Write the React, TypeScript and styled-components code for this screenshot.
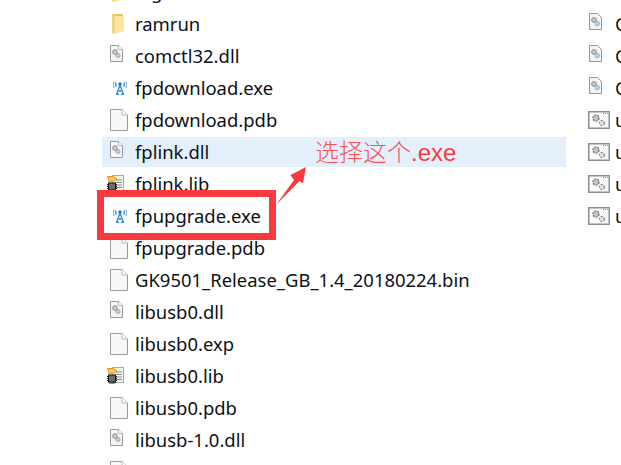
import React from 'react';
import styled, {createGlobalStyle} from 'styled-components';

const GlobalStyle = createGlobalStyle`
  html, body {
    margin: 0;
    padding: 0;
    background: #ffffff;
    overflow: hidden;
  }
`;

const Page = styled.div`
  position: relative;
  width: 621px;
  height: 465px;
  overflow: hidden;
  display: flex;
  font-family: "Noto Sans", "Open Sans", sans-serif;
  color: #0c1116;
`;

const FileColumn = styled.div`
  width: 464px;
  margin-left: 102px;
  margin-top: -24px;
  flex-shrink: 0;
`;

const SideColumn = styled.div`
  margin-left: 22px;
  margin-top: 8px;
  flex: 1;
  min-width: 0;
`;

const Row = styled.div<{$selected?: boolean}>`
  height: 32px;
  display: flex;
  align-items: center;
  box-sizing: border-box;
  background: ${p => (p.$selected ? 'linear-gradient(#fff 1px, #e3f0fb 1px, #e3f0fb 31px, #fff 31px)' : 'transparent')};
`;

const IconSlot = styled.span`
  width: 33px;
  height: 32px;
  flex-shrink: 0;
  display: flex;
  align-items: center;
  justify-content: flex-start;
`;

const FileName = styled.span`
  font-size: 18.45px;
  line-height: 32px;
  white-space: nowrap;
`;

const SideSlot = styled.span`
  width: 27px;
  height: 32px;
  flex-shrink: 0;
  display: flex;
  align-items: center;
`;

const Callout = styled.div`
  position: absolute;
  left: 315px;
  top: 134px;
  font-family: "Noto Sans CJK SC", "Liberation Sans", sans-serif;
  font-size: 24px;
  font-weight: 300;
  line-height: 34px;
  color: #f7525a;
  white-space: nowrap;
`;

const CalloutLatin = styled.span`
  font-family: "Liberation Sans", sans-serif;
  font-weight: 400;
  color: #f83a40;
`;

const Highlight = styled.div`
  position: absolute;
  left: 97px;
  top: 190px;
  width: 179px;
  height: 50px;
  box-sizing: border-box;
  border: 7px solid #f93a3e;
`;

const ArrowMark = styled.svg`
  position: absolute;
  left: 270px;
  top: 160px;
`;

const BlankIcon = () => (
  <svg width="18" height="22" viewBox="0 0 18 22" style={{marginLeft: 8}}>
    <path d="M.5.5H12L17.5 6V21.5H.5Z" fill="#f8f8f8" stroke="#9a9a9a" />
    <path d="M12 .5V6H17.5" fill="#fff" stroke="#b5b5b5" />
  </svg>
);

const DllIcon = () => (
  <svg width="13" height="17" viewBox="0 0 13 17" style={{marginLeft: 8, marginTop: -6}}>
    <path d="M.5.5H8.5L12.5 4.5V16.5H.5Z" fill="#f7f7f7" stroke="#9a9a9a" />
    <path d="M8.5.5V4.5H12.5" fill="#fff" stroke="#b5b5b5" />
    <circle cx="5" cy="7" r="2.3" fill="#d0d0d0" stroke="#8c8c8c" />
    <circle cx="8" cy="10.5" r="2" fill="#b9d8f0" stroke="#8da6ba" />
  </svg>
);

const ExeIcon = () => (
  <svg width="14" height="14" viewBox="0 0 14 14" style={{marginLeft: 11}}>
    <g fill="none" strokeWidth="1.5">
      <path d="M7 4 3.5 13.5M7 4 10.5 13.5M5 10H9M3 13.2H6M8 13.2H11" stroke="#3f8fdd" />
      <path d="M3.4 1.5C2.4 2.8 2.4 4.4 3.4 5.8M10.6 1.5C11.6 2.8 11.6 4.4 10.6 5.8" stroke="#5ba3e6" />
      <path d="M1.2.8C-.1 2.6-.1 5 1.2 6.8M12.8.8C14.1 2.6 14.1 5 12.8 6.8" stroke="#86bdee" />
    </g>
    <circle cx="7" cy="3" r="1.7" fill="#2a7bd0" />
  </svg>
);

const LibIcon = () => (
  <svg width="17" height="17" viewBox="0 0 17 17" style={{marginLeft: 5, marginTop: -2}}>
    <rect x="5.5" y=".5" width="11" height="15" fill="#f5f5f0" stroke="#a8a8a8" />
    <path d="M9 5H15M9 7.5H15M9 10H15M9 12.5H15" stroke="#8a8a8a" />
    <path d="M.5 1.5H6.5L10 4 6.5 6.5H2Z" fill="#f5cd55" stroke="#d9962a" />
    <rect x="1.5" y="8" width="7" height="7" fill="#6d6d6d" stroke="#111" />
    <path d="M0 9.5H1.5M0 11.5H1.5M0 13.5H1.5M8.5 9.5H10M8.5 11.5H10M8.5 13.5H10M3 15V17M5 15V17M7 15V17" stroke="#222" />
  </svg>
);

const FolderIcon = () => (
  <svg width="15" height="22" viewBox="0 0 15 22" style={{marginLeft: 7}}>
    <path d="M3 1H14V17L3 20Z" fill="#e6c568" />
    <path d="M6 3 15 3.5V18L6 21Z" fill="#fbe6a4" />
    <path d="M3 1V20L6 21V3Z" fill="#f3d57f" />
  </svg>
);

const SideFileIcon = () => (
  <svg width="13" height="17" viewBox="0 0 13 17" style={{marginLeft: 1, marginTop: -6}}>
    <path d="M.5.5H8.5L12.5 4.5V16.5H.5Z" fill="#f4f4f4" stroke="#979797" />
    <circle cx="5" cy="7" r="2.4" fill="#c9c9c9" stroke="#8c8c8c" />
    <circle cx="8.2" cy="10.6" r="2.2" fill="#a9d6f5" stroke="#8bb4d0" />
  </svg>
);

const SideAppIcon = () => (
  <svg width="22" height="18" viewBox="0 0 22 18">
    <rect x=".75" y=".75" width="20.5" height="16.5" fill="#fafafa" stroke="#8e8e8e" strokeWidth="1.5" />
    <path d="M15 2.5H20" stroke="#8e8e8e" strokeDasharray="1 1" />
    <circle cx="8" cy="7" r="3" fill="#c4c4c4" stroke="#8a8a8a" strokeWidth="1.6" strokeDasharray="2 1" />
    <circle cx="14" cy="12" r="2.4" fill="#f0f0f0" stroke="#8a8a8a" strokeWidth="1.4" strokeDasharray="2 1" />
  </svg>
);

const icons = {
  blank: BlankIcon,
  dll: DllIcon,
  exe: ExeIcon,
  lib: LibIcon,
  folder: FolderIcon,
};

const files: {name: string; icon: keyof typeof icons}[] = [
  {name: 'log', icon: 'folder'},
  {name: 'ramrun', icon: 'folder'},
  {name: 'comctl32.dll', icon: 'dll'},
  {name: 'fpdownload.exe', icon: 'exe'},
  {name: 'fpdownload.pdb', icon: 'blank'},
  {name: 'fplink.dll', icon: 'dll'},
  {name: 'fplink.lib', icon: 'lib'},
  {name: 'fpupgrade.exe', icon: 'exe'},
  {name: 'fpupgrade.pdb', icon: 'blank'},
  {name: 'GK9501_Release_GB_1.4_20180224.bin', icon: 'blank'},
  {name: 'libusb0.dll', icon: 'dll'},
  {name: 'libusb0.exp', icon: 'blank'},
  {name: 'libusb0.lib', icon: 'lib'},
  {name: 'libusb0.pdb', icon: 'blank'},
  {name: 'libusb-1.0.dll', icon: 'dll'},
  {name: '', icon: 'blank'},
];

const sideFiles = ['C', 'C', 'C', 'u', 'u', 'u', 'u'];

export default function App() {
  return (
    <Page>
      <GlobalStyle />
      <FileColumn>
        {files.map(f => {
          const Icon = icons[f.icon];
          return (
            <Row key={f.name || 'clipped'} $selected={f.name === 'fplink.dll'}>
              <IconSlot><Icon /></IconSlot>
              <FileName>{f.name}</FileName>
            </Row>
          );
        })}
      </FileColumn>
      <SideColumn>
        {sideFiles.map((letter, i) => (
          <Row key={i}>
            <SideSlot>{letter === 'C' ? <SideFileIcon /> : <SideAppIcon />}</SideSlot>
            <FileName>{letter}</FileName>
          </Row>
        ))}
      </SideColumn>
      <Highlight />
      <ArrowMark width="40" height="50" viewBox="0 0 40 50">
        <path d="M6 45 24 20 20.5 15 36 7 33 23.5 29.5 21Z" fill="#f93a3e" />
      </ArrowMark>
      <Callout>选择这个<CalloutLatin>.exe</CalloutLatin></Callout>
    </Page>
  );
}
